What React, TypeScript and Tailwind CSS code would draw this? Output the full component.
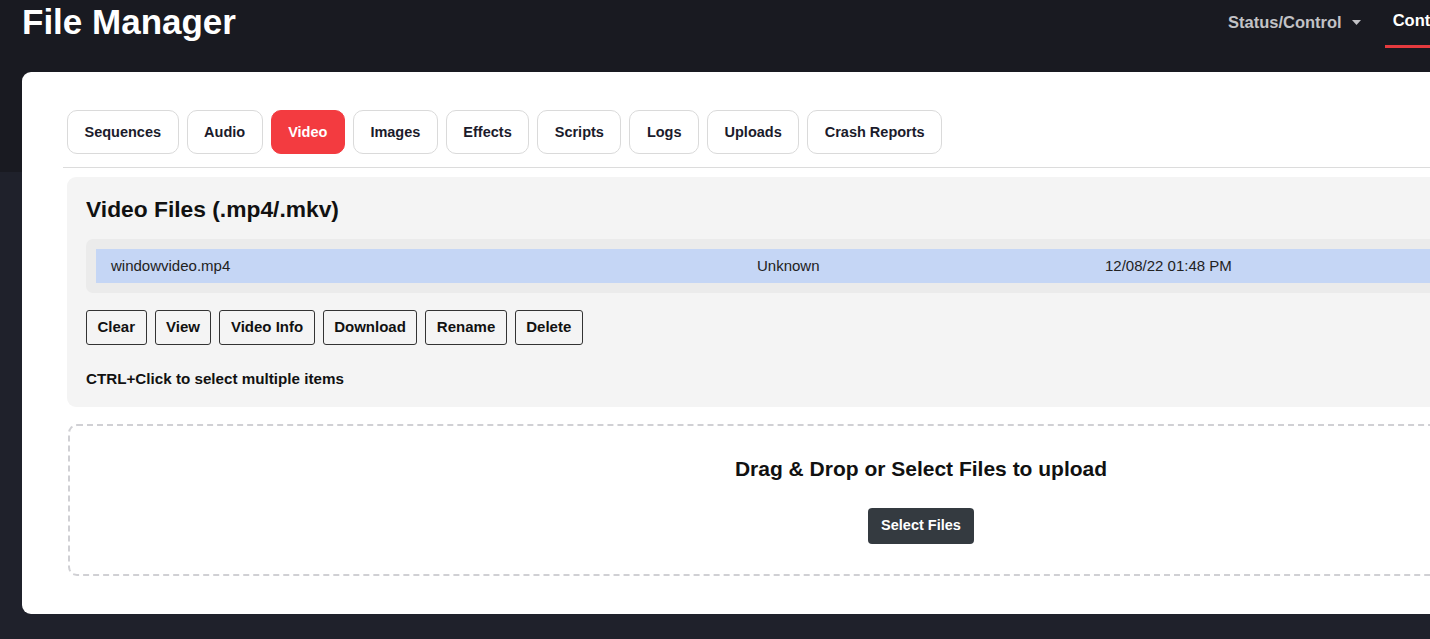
import React from "react";

const tabs = ["Sequences", "Audio", "Video", "Images", "Effects", "Scripts", "Logs", "Uploads", "Crash Reports"];
const actions = ["Clear", "View", "Video Info", "Download", "Rename", "Delete"];

export default function App() {
  return (
    <div className="w-[1430px] h-[639px] overflow-hidden bg-[#1f212b]" style={{ fontFamily: '"Liberation Sans", Arial, sans-serif' }}>
      <div className="w-[1842px] bg-[linear-gradient(to_bottom,#191a21_172px,#1f212b_172px)] pb-[26px]">
        {/* Header */}
        <div className="h-[72px] flex items-start px-[22px]">
          <div className="w-[1198px] pt-[1px] text-[35px] leading-[41px] font-bold text-white">File Manager</div>
          <nav className="flex items-start gap-[16px]">
            <div className="h-[48px] flex items-center px-[8px] pb-[4px] text-[16.5px] font-bold text-[#c2c2c6]">
              <span>Status/Control</span>
              <svg className="ml-[10px]" width="9" height="5" viewBox="0 0 9 5"><path d="M0 0h9L4.5 5z" fill="#c2c2c6" /></svg>
            </div>
            <div className="h-[48px] flex items-center px-[8px] pb-[4px] text-[16.5px] font-bold text-white border-b-[3px] border-[#e53a3e]">
              Content Setup
            </div>
            <div className="h-[48px] flex items-center px-[8px] pb-[4px] text-[16.5px] font-bold text-[#c2c2c6]">
              Input/Output Setup
            </div>
            <div className="h-[48px] flex items-center px-[8px] pb-[4px] text-[16.5px] font-bold text-[#c2c2c6]">
              Help
            </div>
          </nav>
        </div>

        {/* Card */}
        <div className="mx-[22px] bg-white rounded-[9px] pt-[38px] pb-[38px] px-[41px]">
          <div className="flex gap-[8px] pl-[4px] pb-[13px] border-b border-[#dcdcdc]">
            {tabs.map((t) => (
              <div
                key={t}
                className={
                  t === "Video"
                    ? "h-[44px] px-[16.5px] pt-[1px] flex items-center rounded-[10px] border border-[#f33b40] bg-[#f33b40] text-white text-[14.5px] font-bold"
                    : "h-[44px] px-[16.5px] pt-[1px] flex items-center rounded-[10px] border border-[#dadada] bg-white text-[#1b1b2b] text-[14.5px] font-bold"
                }
              >
                {t}
              </div>
            ))}
          </div>

          <div className="mx-[4px] mt-[9px] bg-[#f4f4f4] rounded-[9px] pt-[19px] pb-[18px] px-[19px]">
            <div className="text-[22.8px] leading-[26px] font-bold text-[#111]">Video Files (.mp4/.mkv)</div>
            <div className="mt-[17px] bg-[#ebebeb] rounded-[7px] p-[10px]">
              <div className="h-[34px] flex items-center bg-[#c5d6f5] text-[15px] text-[#222] pl-[15px]">
                <div className="w-[646px]">windowvideo.mp4</div>
                <div className="w-[348px]">Unknown</div>
                <div>12/08/22 01:48 PM</div>
              </div>
            </div>
            <div className="mt-[17px] flex gap-[8px]">
              {actions.map((a) => (
                <div key={a} className="h-[35px] px-[10.5px] flex items-center border border-[#333] rounded-[3px] text-[15px] font-bold text-[#111]">
                  {a}
                </div>
              ))}
            </div>
            <div className="mt-[24px] text-[15.2px] leading-[20px] font-bold text-[#111]">CTRL+Click to select multiple items</div>
          </div>

          <div className="mx-[5px] mt-[17px] h-[152px] border-2 border-dashed border-[#d0d0d4] rounded-[9px] flex flex-col items-center pt-[30px]">
            <div className="text-[21px] leading-[26px] font-bold text-[#111]">Drag &amp; Drop or Select Files to upload</div>
            <div className="mt-[26px] h-[36px] px-[13px] flex items-center rounded-[4px] bg-[#343a40] text-white text-[14.5px] font-bold">Select Files</div>
          </div>
        </div>
      </div>
    </div>
  );
}
